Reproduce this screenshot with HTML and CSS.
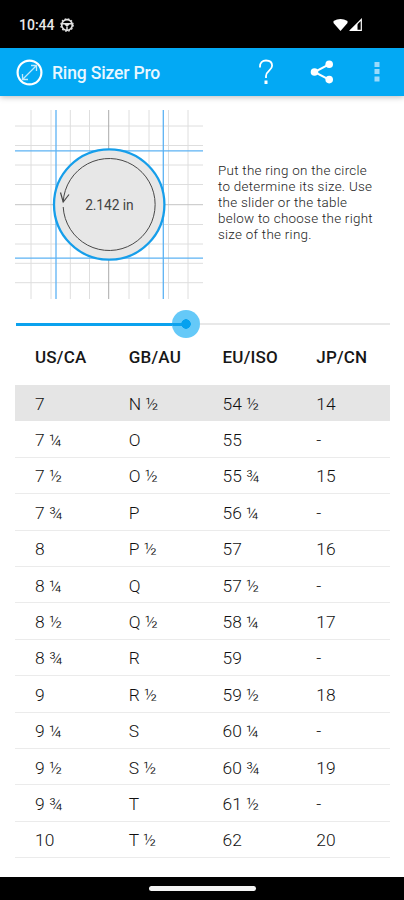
FILE: index.html
```
<!DOCTYPE html>
<html lang="en">
<head>
<meta charset="utf-8">
<title>Ring Sizer Pro</title>
<link rel="stylesheet" href="styles.css">
</head>
<body>
<div class="status">
  <span class="time">10:44</span>
  <svg class="status-app" width="14" height="14" viewBox="0 0 14 14" fill="none" stroke="#e4e4e4"><circle cx="7" cy="7" r="5.3" stroke-width="1.7"/><circle cx="7" cy="7" r="6.2" stroke-width="1.2" stroke-dasharray="1.7 1.55"/><path d="M2 5.800h10M7 6v6M5 6l2 2 2-2" stroke-width="1.5"/></svg>
  <svg class="signals" width="30" height="14" viewBox="0 0 30 14"><path d="M.5 3Q7.500-1.200 14.500 3v2L7.500 13 .5 5z" fill="#fff"/><path d="M17.500 12.300L28.300 1.500v10.800z" fill="none" stroke="#fff" stroke-width="1.200"/><path d="M16.500 12.600L24.500 5v7.600z" fill="#fff"/></svg>
</div>
<header class="bar">
  <svg class="logo" width="27" height="27" viewBox="0 0 27 27" fill="none" stroke="#fff"><circle cx="13.500" cy="13.500" r="11.900" stroke-width="2.200"/><path d="M6.500 20.500l14-14M6.500 15v5.500H12M15 6.500h5.500V12" stroke-width="1.300" opacity=".75"/></svg>
  <h1>Ring Sizer Pro</h1>
  <svg class="help" width="16" height="26" viewBox="0 0 16 26" fill="none" stroke="#fff" stroke-width="1.800"><path d="M2 8.500v-1C2 3.800 4.300 1.500 8 1.500s6.100 2.100 6.100 5.300c0 4.600-6.100 5.200-6.100 10.200v2"/><path d="M8 21.500v3.500" stroke-width="3"/></svg>
  <svg class="share" width="24" height="24" viewBox="0 0 24 24"><path d="M19.500 4.200L4.500 12l15 7.800" fill="none" stroke="#fff" stroke-width="2"/><g fill="#fff"><circle cx="19.200" cy="4.200" r="3.800"/><circle cx="4.500" cy="12" r="3.800"/><circle cx="19.200" cy="19.600" r="3.800"/></g></svg>
  <svg class="more" width="6" height="22" viewBox="0 0 6 22" fill="#9bdafb"><path d="M.5 1h5v5h-5zM.5 8h5v5h-5zM.5 15.500h5v5h-5z"/></svg>
</header>
<main>
  <section class="intro">
    <svg class="gauge" width="188" height="189" viewBox="15 110 188 189">
      <g fill="none" stroke="#dedede" stroke-width="1">
        <path d="M31 110v189M51 110v189M70.300 110v189M89.500 110v189M129 110v189M149 110v189M168.500 110v189M188 110v189"/>
        <path d="M15 126h188M15 145.500h188M15 165h188M15 184.500h188M15 224.500h188M15 244h188M15 263.300h188M15 282.700h188"/>
      </g>
      <path d="M108.700 110v189" stroke="#aaa"/><path d="M15 204.700h188" stroke="#c4c4c4"/>
      <path d="M56 110v189M163.300 110v189M15 150.800h188M15 258.200h188" stroke="#5db3f4" stroke-width="1.300"/>
      <circle cx="109.200" cy="204.500" r="55.200" fill="#e7e7e7" stroke="#169eea" stroke-width="2.300"/>
      <path d="M63.200 207a46 46 0 1 0 0-5" fill="none" stroke="#484848" stroke-width="1"/>
      <path d="M60.500 192.500l2.700 9.500 5.800-7.500" fill="none" stroke="#484848" stroke-width="1.200"/>
      <text x="109.300" y="209.500" text-anchor="middle" class="measure">2.142 in</text>
    </svg>
    <p>Put the ring on the circle<br>to determine its size. Use<br>the slider or the table<br>below to choose the right<br>size of the ring.</p>
  </section>
  <div class="slider"><i class="filled"></i><i class="thumb"></i><i class="rest"></i></div>
  <table>
    <thead><tr><th>US/CA</th><th>GB/AU</th><th>EU/ISO</th><th>JP/CN</th></tr></thead>
    <tbody>
      <tr class="selected"><td>7</td><td>N ½</td><td>54 ½</td><td>14</td></tr>
      <tr><td>7 ¼</td><td>O</td><td>55</td><td>-</td></tr>
      <tr><td>7 ½</td><td>O ½</td><td>55 ¾</td><td>15</td></tr>
      <tr><td>7 ¾</td><td>P</td><td>56 ¼</td><td>-</td></tr>
      <tr><td>8</td><td>P ½</td><td>57</td><td>16</td></tr>
      <tr><td>8 ¼</td><td>Q</td><td>57 ½</td><td>-</td></tr>
      <tr><td>8 ½</td><td>Q ½</td><td>58 ¼</td><td>17</td></tr>
      <tr><td>8 ¾</td><td>R</td><td>59</td><td>-</td></tr>
      <tr><td>9</td><td>R ½</td><td>59 ½</td><td>18</td></tr>
      <tr><td>9 ¼</td><td>S</td><td>60 ¼</td><td>-</td></tr>
      <tr><td>9 ½</td><td>S ½</td><td>60 ¾</td><td>19</td></tr>
      <tr><td>9 ¾</td><td>T</td><td>61 ½</td><td>-</td></tr>
      <tr><td>10</td><td>T ½</td><td>62</td><td>20</td></tr>
    </tbody>
  </table>
</main>
<footer><i></i></footer>
</body>
</html>
```
FILE: styles.css
```
* { box-sizing: border-box; }
body {
  margin: 0;
  width: 404px;
  height: 900px;
  display: flex;
  flex-direction: column;
  overflow: hidden;
  background: #fff;
  font-family: Roboto, "Liberation Sans", sans-serif;
}
svg { display: block; flex: none; }
.status {
  height: 48px;
  flex: none;
  display: flex;
  align-items: center;
  padding: 2px 14px 0 19px;
  background: #000;
}
.time { width: 35px; margin-right: 6px; color: #e8e8e8; font-size: 14px; font-weight: 500; white-space: nowrap; }
.signals { margin-left: auto; margin-right: 27px; }
.bar {
  height: 48px;
  flex: none;
  display: flex;
  align-items: center;
  padding-left: 16px;
  background: #03a9f4;
  box-shadow: 0 1px 6px rgba(0, 0, 0, .28);
}
.bar h1 {
  width: 206px;
  margin: 2px 0 0 9px;
  color: #e9f7ff;
  font-size: 17.5px;
  font-weight: 500;
  line-height: 24px;
  letter-spacing: -.15px;
}
.share { margin-left: 36px; }
.more { margin-left: 40px; }
main { flex: 1; padding: 14px 14px 0 15px; }
.intro { display: flex; height: 189px; }
.intro p {
  margin: 53px 0 0 15px;
  color: #222;
  font-size: 13.4px;
  font-weight: 300;
  line-height: 16.1px;
  letter-spacing: .28px;
  white-space: nowrap;
}
.measure { font-size: 13.8px; letter-spacing: -.1px; fill: #444; }
.slider { display: flex; align-items: center; height: 28px; margin: 11px 0 4px 1px; }
.filled { width: 156px; height: 3px; background: #0ba2ee; }
.thumb {
  width: 28px;
  height: 28px;
  border-radius: 50%;
  background:
    radial-gradient(circle, #05a1ef 4.5px, transparent 5px),
    linear-gradient(#0ba2ee, #0ba2ee) 0 50% / 14px 3px no-repeat,
    #65c9f8;
}
.rest { flex: 1; height: 2px; background: #e8e8e8; }
table { width: 375px; table-layout: fixed; border-collapse: separate; border-spacing: 0; }
th, td { padding: 0 0 0 20px; text-align: left; white-space: nowrap; }
th { height: 43px; padding-bottom: 13px; color: #171717; font-size: 17px; font-weight: 500; letter-spacing: .2px; }
td { height: 36.4px; padding-top: 2px; border-bottom: 1px solid #ebebeb; color: #111; font-size: 17.4px; font-weight: 300; }
.selected td { background: #e5e5e5; border-bottom-color: #e5e5e5; }
footer { height: 23px; flex: none; display: flex; align-items: center; justify-content: center; background: #000; }
footer i { width: 107px; height: 5px; border-radius: 3px; background: #f4f4f4; }
```
